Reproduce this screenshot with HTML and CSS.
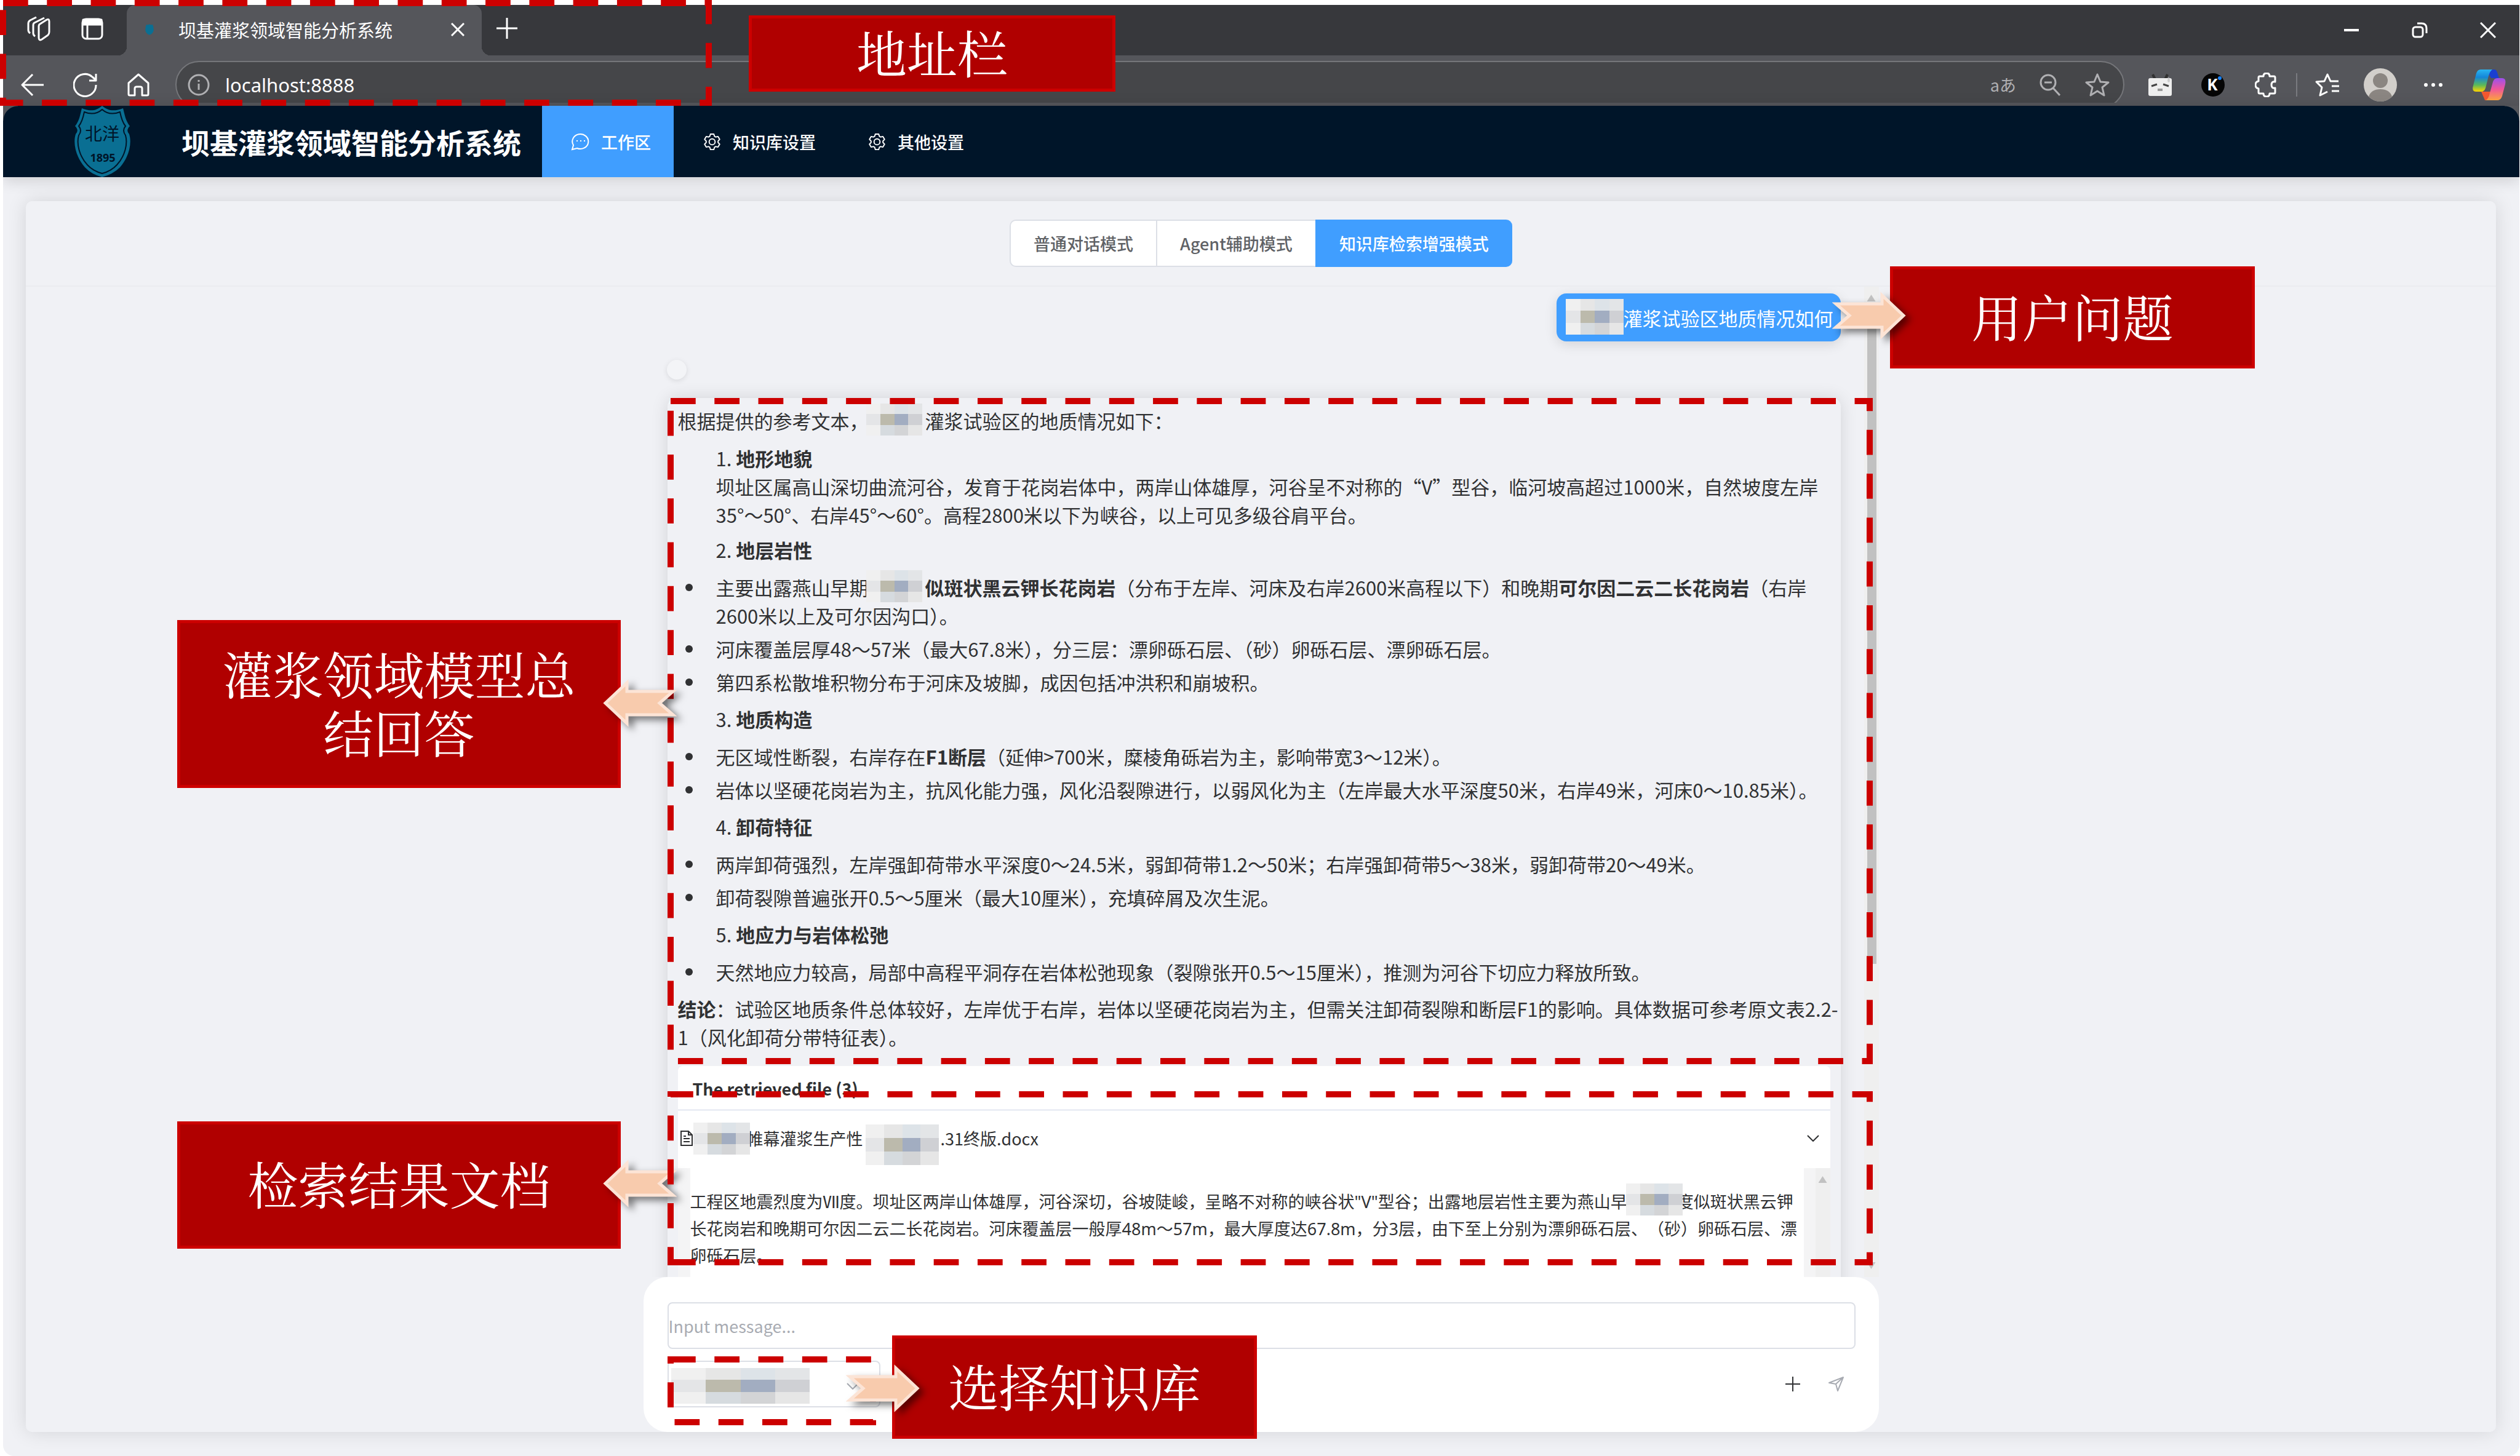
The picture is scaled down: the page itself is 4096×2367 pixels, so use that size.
FILE: index.html
```html
<!DOCTYPE html>
<html lang="zh-CN">
<head>
<meta charset="utf-8">
<title>坝基灌浆领域智能分析系统</title>
<link rel="stylesheet" href="styles.css">
</head>
<body>
<svg class="defs" aria-hidden="true">
  <defs>
    <symbol id="mosaic" viewBox="0 0 4 3" preserveAspectRatio="none">
      <g shape-rendering="crispEdges">
        <rect width="4" height="3" fill="#f0f0f0"/>
        <rect x="1" y="0" width="1" height="1" fill="#e6e6e6"/>
        <rect x="2" y="0" width="1" height="1" fill="#dde3e8"/>
        <rect x="3" y="0" width="1" height="1" fill="#e3e5e7"/>
        <rect x="0" y="1" width="1" height="1" fill="#e4e5e7"/>
        <rect x="1" y="1" width="1" height="1" fill="#bcbaac"/>
        <rect x="2" y="1" width="1" height="1" fill="#a2adc1"/>
        <rect x="3" y="1" width="1" height="1" fill="#cfd0d4"/>
        <rect x="1" y="2" width="1" height="1" fill="#d6dbdf"/>
        <rect x="2" y="2" width="1" height="1" fill="#d3d4d6"/>
        <rect x="3" y="2" width="1" height="1" fill="#e6e6e6"/>
      </g>
    </symbol>
    <symbol id="gear" viewBox="0 0 1024 1024">
      <path fill="currentColor" d="M600.704 64a32 32 0 0 1 30.464 22.208l35.2 109.376c14.784 7.232 28.928 15.36 42.432 24.512l112.384-24.192a32 32 0 0 1 34.432 15.36L944.32 364.8a32 32 0 0 1-4.032 37.504l-77.12 85.12a357.12 357.12 0 0 1 0 49.024l77.12 85.248a32 32 0 0 1 4.032 37.504l-88.704 153.6a32 32 0 0 1-34.432 15.296L708.8 803.904c-13.44 9.088-27.648 17.28-42.368 24.512l-35.264 109.376A32 32 0 0 1 600.704 960H423.296a32 32 0 0 1-30.464-22.208L357.696 828.48a351.616 351.616 0 0 1-42.56-24.64l-112.32 24.256a32 32 0 0 1-34.432-15.36L79.68 659.2a32 32 0 0 1 4.032-37.504l77.12-85.248a357.12 357.12 0 0 1 0-48.896l-77.12-85.248A32 32 0 0 1 79.68 364.8l88.704-153.6a32 32 0 0 1 34.432-15.296l112.32 24.256c13.568-9.152 27.776-17.408 42.56-24.64l35.2-109.312A32 32 0 0 1 423.232 64H600.64zm-23.424 64H446.72l-36.352 113.088-24.512 11.968a294.113 294.113 0 0 0-34.816 20.096l-22.656 15.36-116.224-25.088-65.28 113.152 79.68 88.192-1.92 27.136a293.12 293.12 0 0 0 0 40.192l1.92 27.136-79.808 88.192 65.344 113.152 116.224-25.024 22.656 15.296a294.113 294.113 0 0 0 34.816 20.096l24.512 11.968L446.72 896h130.688l36.48-113.152 24.448-11.904a288.282 288.282 0 0 0 34.752-20.096l22.592-15.296 116.288 25.024 65.28-113.152-79.744-88.192 1.92-27.136a293.12 293.12 0 0 0 0-40.256l-1.92-27.136 79.808-88.128-65.344-113.152-116.288 24.96-22.592-15.232a287.616 287.616 0 0 0-34.752-20.096l-24.448-11.904L577.344 128zM512 320a192 192 0 1 1 0 384 192 192 0 0 1 0-384m0 64a128 128 0 1 0 0 256 128 128 0 0 0 0-256"/>
    </symbol>
    <symbol id="shield" viewBox="0 0 93 116">
      <path fill="#0a6f93" d="M46 0C36 9 26 9 13 4C10 16 9 24 2 33Q9 40 3 46C-2 62 4 84 18 100Q28 111 46 116Q64 111 75 100C89 84 95 62 90 46Q84 40 91 33C84 24 83 16 80 4C67 9 56 9 46 0Z"/>
    </symbol>
    <symbol id="arrow" viewBox="-3 -3 122 80">
      <path d="M3 18H78V4L113 37L78 70V56H3L25 37Z" fill="#f8cbad" stroke="#fce4d6" stroke-width="5"/>
    </symbol>
    <linearGradient id="cop-a" x1="0" y1="0" x2="0" y2="1"><stop offset="0" stop-color="#29b6f2"/><stop offset=".35" stop-color="#1486d8"/><stop offset=".7" stop-color="#5bb95a"/><stop offset="1" stop-color="#ffd400"/></linearGradient>
    <linearGradient id="cop-b" x1="0" y1="0" x2="0" y2="1"><stop offset="0" stop-color="#9b50ee"/><stop offset=".5" stop-color="#f0569a"/><stop offset="1" stop-color="#ffa63f"/></linearGradient>
  </defs>
</svg>

<div class="window">
  <div class="tabstrip">
    <div class="strip-tools">
      <button class="ico" aria-label="工作区"><svg width="38" height="40" viewBox="0 0 38 40" class="line"><path d="M19 16Q19 13 21 12L32 5Q36 3 36 8V25Q36 28 34 30L24 37Q19 40 19 34ZM13 32Q10 30 10 27V14Q10 11 12 10L28 2M5 27Q2 25 2 22V11Q2 8 5 6L15 1"/></svg></button>
      <button class="ico" aria-label="标签页"><svg width="36" height="36" viewBox="0 0 36 36" class="line"><rect x="2" y="2" width="32" height="32" rx="6"/><path d="M3 3H33V11H3Z" fill="#fff"/><path d="M10 11V34"/></svg></button>
    </div>
    <div class="tab">
      <svg width="14" height="18"><use href="#shield" width="14" height="18"/></svg>
      <span class="tab-title">坝基灌浆领域智能分析系统</span>
      <button class="ico tab-close" aria-label="关闭标签页"><svg width="22" height="22" viewBox="0 0 22 22" class="line"><path d="M1 1L21 21M21 1L1 21"/></svg></button>
    </div>
    <button class="ico new-tab" aria-label="新建标签页"><svg width="34" height="34" viewBox="0 0 34 34" class="line"><path d="M17 0V34M0 17H34"/></svg></button>
    <div class="win-controls">
      <button class="ico" aria-label="最小化"><svg width="26" height="26" viewBox="0 0 26 26" class="line"><path d="M1 13H25" stroke-width="4"/></svg></button>
      <button class="ico" aria-label="还原"><svg width="26" height="26" viewBox="0 0 26 26" class="line"><rect x="2" y="8" width="16" height="16" rx="4"/><path d="M9 2H16Q24 2 24 10V18"/></svg></button>
      <button class="ico" aria-label="关闭"><svg width="26" height="26" viewBox="0 0 26 26" class="line"><path d="M1 1L25 25M25 1L1 25"/></svg></button>
    </div>
  </div>

  <div class="toolbar">
    <div class="toolbar-row">
      <button class="tool" aria-label="后退"><svg width="38" height="36" viewBox="0 0 38 36" class="line"><path d="M37 18H2M19 1L2 18L19 35"/></svg></button>
      <button class="tool" aria-label="刷新"><svg width="40" height="40" viewBox="0 0 40 40" class="line"><path d="M37 20A18 18 0 1 1 31 7L37 12M37 2V13H26"/></svg></button>
      <button class="tool" aria-label="主页"><svg width="36" height="38" viewBox="0 0 36 38" class="line"><path d="M2 16L18 2L34 16V34Q34 36 32 36H24V25Q24 22 21 22H15Q12 22 12 25V36H4Q2 36 2 34Z"/></svg></button>
      <div class="address">
        <svg width="36" height="36" viewBox="0 0 36 36" class="dim"><circle cx="18" cy="18" r="16"/><path d="M18 16V26M18 10V13"/></svg>
        <input class="url" type="text" aria-label="地址" value="localhost:8888">
        <span class="translate">aあ</span>
        <svg width="34" height="36" viewBox="0 0 34 36" class="dim"><circle cx="14" cy="14" r="12"/><path d="M8 14H20M22 23L33 35"/></svg>
        <svg width="40" height="38" viewBox="0 0 40 38" class="dim"><path d="M20 2L25 14L38 15L28 23L31 36L20 29L9 36L12 23L2 15L15 14Z"/></svg>
      </div>
      <button class="tool" aria-label="扩展一"><svg width="40" height="38" viewBox="0 0 40 38"><path d="M8 2L12 10M32 2L28 10" stroke="#303030" stroke-width="4"/><rect x="1" y="8" width="38" height="29" rx="3" fill="#eee"/><path d="M6 21L15 18M34 21L25 18" stroke="#444" stroke-width="3"/><rect x="16" y="25" width="8" height="4" fill="#999"/><path d="M34 6Q30 14 34 15Q38 14 34 6" fill="#ccc"/></svg></button>
      <button class="tool" aria-label="扩展二"><svg width="40" height="40" viewBox="0 0 40 40"><circle cx="20" cy="20" r="19" fill="#050505"/><text x="19" y="29" text-anchor="middle" class="kimi">K</text><circle cx="31" cy="9" r="3" fill="#1783ff"/></svg></button>
      <button class="tool" aria-label="扩展"><svg width="36" height="40" viewBox="0 0 36 40" class="line"><path d="M8 6H14Q14 1 19 1Q24 1 24 6H31Q33 6 33 8V15Q27 14 27 20Q27 26 33 25V32Q33 34 31 34H24Q24 39 19 39Q14 39 14 34H8Q6 34 6 32V26Q1 25 1 20Q1 15 6 14V8Q6 6 8 6Z"/></svg></button>
      <span class="divider"></span>
      <button class="tool" aria-label="收藏夹"><svg width="40" height="38" viewBox="0 0 40 38" class="line"><path d="M38 13H25L20 2L15 13L2 14L11 23L8 36L20 30M27 21H39M27 29H39"/></svg></button>
      <button class="tool" aria-label="用户"><svg width="54" height="54" viewBox="0 0 54 54"><circle cx="27" cy="27" r="27" fill="#d2cfcb"/><circle cx="27" cy="20" r="12" fill="#8b8682"/><path d="M8 46Q12 34 27 34Q42 34 46 46Q38 54 27 54Q16 54 8 46Z" fill="#8b8682"/></svg></button>
      <button class="tool" aria-label="更多"><svg width="32" height="8" viewBox="0 0 32 8"><g fill="#fff"><circle cx="4" cy="4" r="3"/><circle cx="16" cy="4" r="3"/><circle cx="28" cy="4" r="3"/></g></svg></button>
      <button class="tool copilot" aria-label="Copilot"><svg width="54" height="50" viewBox="0 0 54 50"><path d="M14 36L20 50H36L30 36Z" fill="#f4582f"/><path d="M22 0H36Q39 0 41 8L43 14H30Z" fill="#1a3fd0"/><path d="M13 0H32Q28 2 25 14L21 30Q19 36 14 36H6Q-2 36 1 26L6 6Q8 0 13 0Z" fill="url(#cop-a)"/><path d="M40 14H48Q55 14 53 24L48 43Q46 50 40 50H21Q26 48 28 38L33 20Q35 14 40 14Z" fill="url(#cop-b)"/></svg></button>
    </div>
  </div>

  <header class="navbar">
    <svg class="logo" width="93" height="116" viewBox="0 0 93 116">
      <use href="#shield" width="93" height="116"/>
      <path d="M46 6C37 14 27 14 17 10C15 20 13 27 8 33Q14 40 8 48C4 62 9 82 22 96Q31 106 46 110Q61 106 70 96C83 82 88 62 84 48Q78 40 84 33C79 27 77 20 75 10C65 14 55 14 46 6Z" fill="none" stroke="#001529" stroke-width="2"/>
      <text x="46" y="56" text-anchor="middle" class="logo-name">北洋</text>
      <text x="47" y="91" text-anchor="middle" class="logo-year">1895</text>
    </svg>
    <h1 class="brand">坝基灌浆领域智能分析系统</h1>
    <nav class="menu">
      <a href="#" class="menu-item active"><svg width="31" height="30" viewBox="0 0 31 30" class="chat"><path d="M2 28L4 21A13 12 0 1 1 10 26Z"/><path d="M9 14H11M15 14H17M21 14H23"/></svg>工作区</a>
      <a href="#" class="menu-item"><svg width="31" height="31"><use href="#gear" width="31" height="31"/></svg>知识库设置</a>
      <a href="#" class="menu-item"><svg width="31" height="31"><use href="#gear" width="31" height="31"/></svg>其他设置</a>
    </nav>
  </header>

  <main class="card">
    <div class="mode-bar">
      <div class="modes">
        <button class="mode">普通对话模式</button><button class="mode">Agent辅助模式</button><button class="mode on">知识库检索增强模式</button>
      </div>
    </div>

    <section class="chat-area">
      <div class="messages">
        <div class="bubble"><svg width="94" height="58"><use href="#mosaic" width="94" height="58"/></svg>灌浆试验区地质情况如何</div>
        <div class="avatar"></div>
        <article class="answer">
          <p>根据提供的参考文本，<span class="masked"><svg width="91" height="52"><use href="#mosaic" width="91" height="52"/></svg></span>灌浆试验区的地质情况如下：</p>
          <h3><span>1. </span>地形地貌</h3>
          <p class="detail">坝址区属高山深切曲流河谷，发育于花岗岩体中，两岸山体雄厚，河谷呈不对称的“V”型谷，临河坡高超过1000米，自然坡度左岸<br>35°～50°、右岸45°～60°。高程2800米以下为峡谷，以上可见多级谷肩平台。</p>
          <h3><span>2. </span>地层岩性</h3>
          <ul>
            <li>主要出露燕山早期<span class="masked"><svg width="91" height="52"><use href="#mosaic" width="91" height="52"/></svg></span><b>似斑状黑云钾长花岗岩</b>（分布于左岸、河床及右岸2600米高程以下）和晚期<b>可尔因二云二长花岗岩</b>（右岸<br>2600米以上及可尔因沟口）。</li>
            <li>河床覆盖层厚48～57米（最大67.8米），分三层：漂卵砾石层、（砂）卵砾石层、漂卵砾石层。</li>
            <li>第四系松散堆积物分布于河床及坡脚，成因包括冲洪积和崩坡积。</li>
          </ul>
          <h3><span>3. </span>地质构造</h3>
          <ul>
            <li>无区域性断裂，右岸存在<b>F1断层</b>（延伸&gt;700米，糜棱角砾岩为主，影响带宽3～12米）。</li>
            <li>岩体以坚硬花岗岩为主，抗风化能力强，风化沿裂隙进行，以弱风化为主（左岸最大水平深度50米，右岸49米，河床0～10.85米）。</li>
          </ul>
          <h3><span>4. </span>卸荷特征</h3>
          <ul>
            <li>两岸卸荷强烈，左岸强卸荷带水平深度0～24.5米，弱卸荷带1.2～50米；右岸强卸荷带5～38米，弱卸荷带20～49米。</li>
            <li>卸荷裂隙普遍张开0.5～5厘米（最大10厘米），充填碎屑及次生泥。</li>
          </ul>
          <h3><span>5. </span>地应力与岩体松弛</h3>
          <ul>
            <li>天然地应力较高，局部中高程平洞存在岩体松弛现象（裂隙张开0.5～15厘米），推测为河谷下切应力释放所致。</li>
          </ul>
          <p class="summary"><b>结论</b>：试验区地质条件总体较好，左岸优于右岸，岩体以坚硬花岗岩为主，但需关注卸荷裂隙和断层F1的影响。具体数据可参考原文表2.2-<br>1（风化卸荷分带特征表）。</p>

          <div class="files">
            <h4 class="files-title">The retrieved file (3)</h4>
            <button class="file-row">
              <svg width="22" height="25" viewBox="0 0 22 25" class="doc"><path d="M2 1H14L20 7V24H2ZM14 1V7H20M6 9H10M6 13H16M6 18H16"/></svg>
              <svg class="file-mask" width="92" height="52"><use href="#mosaic" width="92" height="52"/></svg>
              <span>帷幕灌浆生产性</span>
              <svg class="file-mask-2" width="119" height="66"><use href="#mosaic" width="119" height="66"/></svg>
              <span>.31终版.docx</span>
              <svg class="chev" width="20" height="11" viewBox="0 0 20 11"><path d="M1 1L10 10L19 1"/></svg>
            </button>
            <div class="excerpt">
              <p class="excerpt-text">工程区地震烈度为Ⅶ度。坝址区两岸山体雄厚，河谷深切，谷坡陡峻，呈略不对称的峡谷状"V"型谷；出露地层岩性主要为燕山早<span class="masked small"><svg width="92" height="52"><use href="#mosaic" width="92" height="52"/></svg></span>度似斑状黑云钾<br>长花岗岩和晚期可尔因二云二长花岗岩。河床覆盖层一般厚48m～57m，最大厚度达67.8m，分3层，由下至上分别为漂卵砾石层、（砂）卵砾石层、漂<br>卵砾石层。</p>
              <div class="excerpt-track"><span class="up"></span></div>
            </div>
          </div>
        </article>
      </div>
      <div class="track"><span class="up"></span><span class="thumb"></span><span class="down"></span></div>
    </section>

    <form class="composer">
      <input class="message" type="text" placeholder="Input message..." aria-label="Input message">
      <div class="composer-row">
        <button type="button" class="select" aria-label="选择知识库"><svg width="225" height="58"><use href="#mosaic" width="225" height="58"/></svg><svg class="chev pale" width="20" height="11" viewBox="0 0 20 11"><path d="M1 1L10 10L19 1"/></svg></button>
        <div class="actions">
          <button type="button" class="ico" aria-label="添加"><svg width="26" height="26" viewBox="0 0 26 26"><path d="M13 1V25M1 13H25" stroke="#303133" stroke-width="2"/></svg></button>
          <button type="button" class="ico" aria-label="发送"><svg width="26" height="26" viewBox="0 0 26 26"><path d="M1 11L24 2L15 24L12 13ZM12 13L24 2" fill="none" stroke="#a8abb2" stroke-width="2" stroke-linejoin="round"/></svg></button>
        </div>
      </div>
    </form>
  </main>
</div>

<div class="note note-address">地址栏</div>
<div class="note note-question">用户问题</div>
<div class="note note-answer">灌浆领域模型总结回答</div>
<div class="note note-files">检索结果文档</div>
<div class="note note-base">选择知识库</div>
<svg class="marks" viewBox="0 0 4096 2367" aria-hidden="true">
  <g class="frame">
    <path d="M5 5H1152V167H5Z"/>
    <path d="M1090 652H3039V1725H1090Z"/>
    <path d="M1090 2210H1419V2312H1090Z"/>
  </g>
  <g class="arrows">
    <use href="#arrow" x="2978" y="473" width="122" height="80"/>
    <use href="#arrow" x="1375" y="2217" width="122" height="80"/>
    <use href="#arrow" x="-1100" y="1103" width="122" height="80" transform="scale(-1 1)"/>
    <use href="#arrow" x="-1100" y="1884" width="122" height="80" transform="scale(-1 1)"/>
  </g>
  <g class="frame"><path d="M1090 2052H3039V1779H1090Z"/></g>
</svg>
</body>
</html>
```
FILE: styles.css
```css
* { box-sizing: border-box; }
html, body { margin: 0; height: 100%; }
body {
  position: relative;
  padding: 8px 1px 0 5px;
  background: #fff;
  overflow: hidden;
  font-family: "Noto Sans CJK SC", "Noto Sans", sans-serif;
  font-size: 27px;
  color: #303133;
}
button, input { font: inherit; color: inherit; border: 0; padding: 0; margin: 0; background: none; }
svg { display: block; flex: none; }
h1, h3, h4, p, ul { margin: 0; padding: 0; }
.defs { position: absolute; width: 0; height: 0; }
.line { fill: none; stroke: #fff; stroke-width: 3; stroke-linejoin: round; }
.dim { fill: none; stroke: #b0b0b3; stroke-width: 3; stroke-linejoin: round; }

.window {
  display: flex;
  flex-direction: column;
  height: 100%;
  background: #f0f1f5;
  border-radius: 0 0 18px 18px;
  overflow: hidden;
}

/* browser chrome */
.tabstrip { display: flex; flex: none; height: 82px; background: #37383c; }
.strip-tools { display: flex; align-items: center; gap: 50px; width: 201px; padding: 0 0 4px 39px; }
.tab {
  position: relative;
  display: flex;
  align-items: center;
  width: 577px;
  padding: 0 28px 2px 30px;
  background: #55565b;
  border-radius: 14px 14px 0 0;
}
.tab::before, .tab::after {
  content: "";
  position: absolute;
  bottom: 0;
  width: 14px;
  height: 14px;
}
.tab::before { left: -14px; background: radial-gradient(circle at 0 0, transparent 14px, #55565b 14px); }
.tab::after { right: -14px; background: radial-gradient(circle at 100% 0, transparent 14px, #55565b 14px); }
.tab-title { margin-left: 40px; font-size: 29px; line-height: 40px; color: #fff; white-space: nowrap; }
.tab-close { margin-left: auto; }
.new-tab { margin: 0 0 6px 24px; }
.win-controls { display: flex; margin: 0 -4px 0 auto; }
.win-controls .ico { display: grid; place-items: center; width: 111px; }
.toolbar {
  flex: none;
  height: 82px;
  padding: 9px 2px 0 5px;
  background: #55565b;
  border-bottom: 5px solid #55565b;
  overflow: hidden;
}
.toolbar-row { display: flex; align-items: center; height: 77px; }
.tool { display: grid; place-items: center; width: 86px; height: 77px; }
.copilot { width: 95px; }
.divider { width: 2px; height: 38px; margin: 0 6px; background: #7a7b80; }
.address {
  display: flex;
  align-items: center;
  flex: 1;
  height: 77px;
  margin: 0 15px 0 17px;
  padding: 0 22px 0 18px;
  background: #454649;
  border: 2px solid #75767a;
  border-radius: 39px;
}
.url { flex: 1; margin-left: 25px; font-family: "Noto Sans", sans-serif; font-size: 31px; color: #fff; }
.translate { margin-right: 38px; font-size: 27px; line-height: 36px; color: #b0b0b3; }
.address .dim:last-child { margin-left: 40px; }
.kimi { font: bold 26px "Noto Sans", sans-serif; fill: #fff; }

/* application header */
.navbar {
  display: flex;
  align-items: center;
  flex: none;
  height: 116px;
  padding-left: 115px;
  background:
    radial-gradient(circle at 24px 24px, #001529 23px, #55565b 24px) left top / 24px 24px no-repeat,
    radial-gradient(circle at 0 24px, #001529 23px, #55565b 24px) right top / 24px 24px no-repeat,
    #001529;
  box-shadow: 0 4px 24px rgba(0, 0, 0, .16);
  color: #fff;
}
.logo-name { font: 28px "Noto Sans CJK SC", sans-serif; fill: #001529; }
.logo-year { font: bold 18px "Noto Sans", sans-serif; fill: #001529; }
.brand { margin: 0 34px 0 82px; font-size: 46px; line-height: 68px; font-weight: 700; white-space: nowrap; }
.menu { display: flex; height: 116px; }
.menu-item {
  display: flex;
  align-items: center;
  gap: 18px;
  padding: 0 37px 0 47px;
  color: #fff;
  font-weight: 500;
  text-decoration: none;
  white-space: nowrap;
}
.menu-item.active { background: #409eff; }
.chat { fill: none; stroke: #fff; stroke-width: 2; }

/* main card */
.card {
  display: flex;
  flex-direction: column;
  flex: 1;
  min-height: 0;
  margin: 39px 38px 39px 37px;
  border-radius: 10px;
  box-shadow: 0 0 32px rgba(0, 0, 0, .12);
}
.mode-bar {
  display: flex;
  justify-content: center;
  align-items: flex-start;
  flex: none;
  height: 139px;
  padding-top: 30px;
  border-bottom: 2px solid #ebecf0;
}
.modes { display: flex; }
.mode {
  height: 77px;
  padding: 0 37px;
  background: #fff;
  border: 2px solid #dcdfe6;
  border-right-width: 0;
  color: #606266;
  font-weight: 500;
}
.mode:first-child { border-radius: 10px 0 0 10px; }
.mode.on { background: #409eff; border-color: #409eff; border-radius: 0 10px 10px 0; padding: 0 38px 0 37px; color: #fff; }

.chat-area { display: flex; flex: 1; min-height: 0; width: 2008px; margin: 0 auto; overflow: hidden; }
.messages { flex: 1; display: flex; flex-direction: column; padding: 11px 38px 0 39px; min-width: 0; }
.bubble {
  display: flex;
  align-items: center;
  align-self: flex-end;
  flex: none;
  height: 78px;
  padding: 0 12px 0 15px;
  background: #409eff;
  border-radius: 16px;
  box-shadow: 0 5px 20px rgba(0, 0, 0, .12);
  color: #fff;
  font-size: 31px;
  white-space: nowrap;
}
.bubble svg { margin-bottom: 2px; }
.avatar {
  flex: none;
  width: 32px;
  height: 32px;
  margin: 30px 0 30px -1px;
  background: #f3f4f7;
  border-radius: 50%;
  box-shadow: 0 2px 8px rgba(0, 0, 0, .1);
}
.answer {
  flex: none;
  padding: 14px 17px 16px;
  border-radius: 14px;
  box-shadow: 0 0 28px rgba(0, 0, 0, .12);
  font-size: 31px;
  line-height: 46px;
  white-space: nowrap;
}
.answer h3 { margin: 14px 0 15px 62px; font-size: 31px; font-weight: 700; }
.answer p + h3 { margin-top: 15px; }
.answer .detail + h3 { margin-top: 11px; }
.answer h3 + .detail { margin-top: -15px; }
.answer h3 span { font-weight: 400; }
.detail { padding-left: 62px; }
.answer ul { list-style: none; }
.answer li { position: relative; padding-left: 62px; }
.answer li::before {
  content: "";
  position: absolute;
  left: 12px;
  top: 17px;
  width: 12px;
  height: 12px;
  border-radius: 50%;
  background: #303133;
}
.answer li + li { margin-top: 8px; }
.summary { margin: 14px 0 24px; }
.masked { position: relative; display: inline-block; width: 92px; height: 30px; vertical-align: middle; }
.masked svg { position: absolute; left: -4px; top: -18px; }
.masked.small { width: 81px; }
.masked.small svg { left: -2px; }

.files { background: #fff; border-radius: 8px 8px 0 0; font-size: 27px; }
.files-title { height: 73px; padding: 14px 24px 0; font-size: 27px; font-weight: 700; border-bottom: 3px solid #ebeef5; }
.file-row { display: flex; align-items: center; width: 100%; height: 93px; padding: 0 18px 4px 3px; }
.file-row span { line-height: 40px; }
.file-mask { position: relative; z-index: 1; margin-right: -5px; }
.file-mask-2 { margin: 20px 3px 0 4px; }
.doc { fill: none; stroke: #303133; stroke-width: 2; }
.chev { margin-left: auto; fill: none; stroke: #303133; stroke-width: 2; }
.chev.pale { stroke: #a8abb2; }
.excerpt { display: flex; height: 400px; padding-left: 20px; background: #f4f4f5; }
.excerpt-text {
  flex: 1;
  min-width: 0;
  margin-right: 19px;
  padding-top: 33px;
  background: #fff;
  font-family: "Noto Sans", "Noto Sans CJK SC", sans-serif;
  line-height: 44px;
  text-spacing-trim: space-all;
}
.excerpt-track { width: 24px; padding: 13px 5px; background: #efefef; }
.up { display: block; width: 14px; height: 11px; background: #c1c1c1; clip-path: polygon(50% 0, 100% 100%, 0 100%); }
.down { display: block; width: 14px; height: 11px; margin-top: auto; background: #c1c1c1; clip-path: polygon(0 0, 100% 0, 50% 100%); }
.track { display: flex; flex-direction: column; flex: none; width: 24px; padding: 13px 5px; background: #efefef; }
.thumb { width: 15px; height: 1067px; margin-top: 10px; background: #c1c1c1; }

/* composer */
.composer {
  flex: none;
  width: 2008px;
  height: 252px;
  margin: 0 auto;
  padding: 41px 38px 0 39px;
  background: #fff;
  border-radius: 39px;
}
.message {
  display: block;
  width: 100%;
  height: 76px;
  border: 2px solid #dcdfe6;
  border-radius: 8px;
}
.message::placeholder { color: #a8abb2; opacity: 1; }
.composer-row { display: flex; justify-content: space-between; margin-top: 19px; }
.select {
  display: flex;
  align-items: center;
  width: 346px;
  height: 76px;
  padding: 6px 33px 0 4px;
  border: 2px solid #dcdfe6;
  border-radius: 8px;
}
.actions { display: flex; align-items: center; gap: 45px; height: 76px; padding-right: 18px; }

/* annotations over the page */
.note {
  position: absolute;
  display: flex;
  align-items: center;
  justify-content: center;
  padding: 8px 60px 0;
  background: #b00000;
  border: 5px solid #c00;
  color: #fff;
  font-family: "Liberation Serif", "Noto Serif CJK SC", "Noto Sans CJK SC", serif;
  font-size: 82px;
  font-weight: 400;
  line-height: 95px;
  text-align: center;
}
.note-address { left: 1217px; top: 25px; width: 596px; height: 124px; }
.note-question { left: 3072px; top: 433px; width: 593px; height: 166px; }
.note-answer { left: 288px; top: 1008px; width: 721px; height: 273px; }
.note-files { left: 288px; top: 1823px; width: 721px; height: 207px; }
.note-base { left: 1450px; top: 2171px; width: 593px; height: 168px; }
.marks { position: absolute; left: 0; top: 0; width: 100%; height: 100%; pointer-events: none; }
.frame { fill: none; stroke: #c00; stroke-width: 10; stroke-dasharray: 40.73 30.55; }
.arrows { filter: drop-shadow(8px 6px 6px rgba(0, 0, 0, .5)); }
```
